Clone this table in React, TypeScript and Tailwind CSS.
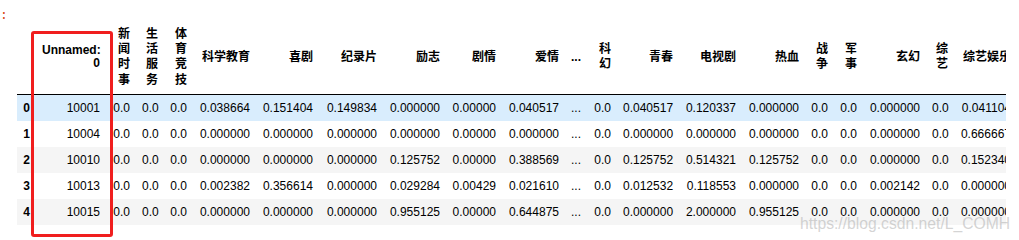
import React from 'react';

type Col = { label: string; w: string };

const cols: Col[] = [
  { label: '新闻时事', w: 'w-[30px]' },
  { label: '生活服务', w: 'w-[28px]' },
  { label: '体育竞技', w: 'w-[29px]' },
  { label: '科学教育', w: 'w-[63px]' },
  { label: '喜剧', w: 'w-[63px]' },
  { label: '纪录片', w: 'w-[64px]' },
  { label: '励志', w: 'w-[63px]' },
  { label: '剧情', w: 'w-[56px]' },
  { label: '爱情', w: 'w-[63px]' },
  { label: '...', w: 'w-[22px]' },
  { label: '科幻', w: 'w-[30px]' },
  { label: '青春', w: 'w-[62px]' },
  { label: '电视剧', w: 'w-[63px]' },
  { label: '热血', w: 'w-[63px]' },
  { label: '战争', w: 'w-[29px]' },
  { label: '军事', w: 'w-[29px]' },
  { label: '玄幻', w: 'w-[63px]' },
  { label: '综艺', w: 'w-[28px]' },
  { label: '综艺娱乐', w: 'w-[63px]' },
];

const rows: { idx: string; id: string; vals: string[]; bg: string }[] = [
  {
    idx: '0',
    id: '10001',
    bg: 'bg-[#d9edfd]',
    vals: ['0.0', '0.0', '0.0', '0.038664', '0.151404', '0.149834', '0.000000', '0.00000', '0.040517', '...', '0.0', '0.040517', '0.120337', '0.000000', '0.0', '0.0', '0.000000', '0.0', '0.041104'],
  },
  {
    idx: '1',
    id: '10004',
    bg: 'bg-white',
    vals: ['0.0', '0.0', '0.0', '0.000000', '0.000000', '0.000000', '0.000000', '0.00000', '0.000000', '...', '0.0', '0.000000', '0.000000', '0.000000', '0.0', '0.0', '0.000000', '0.0', '0.666667'],
  },
  {
    idx: '2',
    id: '10010',
    bg: 'bg-[#f5f5f5]',
    vals: ['0.0', '0.0', '0.0', '0.000000', '0.000000', '0.000000', '0.125752', '0.00000', '0.388569', '...', '0.0', '0.125752', '0.514321', '0.125752', '0.0', '0.0', '0.000000', '0.0', '0.152340'],
  },
  {
    idx: '3',
    id: '10013',
    bg: 'bg-white',
    vals: ['0.0', '0.0', '0.0', '0.002382', '0.356614', '0.000000', '0.029284', '0.00429', '0.021610', '...', '0.0', '0.012532', '0.118553', '0.000000', '0.0', '0.0', '0.002142', '0.0', '0.000000'],
  },
  {
    idx: '4',
    id: '10015',
    bg: 'bg-[#f5f5f5]',
    vals: ['0.0', '0.0', '0.0', '0.000000', '0.000000', '0.000000', '0.955125', '0.00000', '0.644875', '...', '0.0', '0.000000', '2.000000', '0.955125', '0.0', '0.0', '0.000000', '0.0', '0.000000'],
  },
];

export default function App() {
  return (
    <div className="relative w-[1019px] h-[240px] overflow-hidden bg-white font-['Liberation_Sans','Noto_Sans_CJK_SC',sans-serif] text-black">
      <div className="flex">
        <div className="w-[17px] shrink-0 pt-[9px] font-['Liberation_Mono',monospace] text-[13px] leading-none text-[#d84315]">
          :
        </div>
        <div className="w-[989px] shrink-0 overflow-hidden pt-[20.67px]">
          <table className="w-[1000px] table-fixed border-separate border-spacing-0 text-[12px]">
            <colgroup>
              <col className="w-[19px]" />
              <col className="w-[70px]" />
              {cols.map((c, i) => (
                <col key={i} className={c.w} />
              ))}
            </colgroup>
            <thead>
              <tr>
                <th className="border-b border-black px-[6px] py-[6px]"></th>
                <th className="border-b border-black px-[6px] py-[6px] text-right align-middle font-bold leading-[13.8px] whitespace-nowrap">
                  Unnamed:
                  <br />0
                </th>
                {cols.map((c, i) => (
                  <th
                    key={i}
                    className="border-b border-black px-[6px] py-[6px] text-right align-middle font-bold leading-[15.33px]"
                  >
                    {c.label}
                  </th>
                ))}
              </tr>
            </thead>
            <tbody>
              {rows.map((r) => (
                <tr key={r.idx} className={r.bg}>
                  <th className="px-[6px] py-[6px] text-right align-middle font-bold leading-[14px]">{r.idx}</th>
                  <td className="px-[6px] py-[6px] text-right align-middle leading-[14px] whitespace-nowrap">{r.id}</td>
                  {r.vals.map((v, i) => (
                    <td key={i} className="px-[6px] py-[6px] text-right align-middle leading-[14px] whitespace-nowrap">
                      {v}
                    </td>
                  ))}
                </tr>
              ))}
            </tbody>
          </table>
        </div>
      </div>

      <div className="pointer-events-none absolute left-[31px] top-[31px] h-[206px] w-[82px] rounded-[3px] border-[3px] border-[#f01e1e]" />

      <div className="pointer-events-none absolute left-[800px] top-[216px] whitespace-nowrap font-['Liberation_Sans',sans-serif] text-[15.7px] leading-none text-[#aaaaaa]/50">
        https://blog.csdn.net/L_COMH
      </div>
    </div>
  );
}
